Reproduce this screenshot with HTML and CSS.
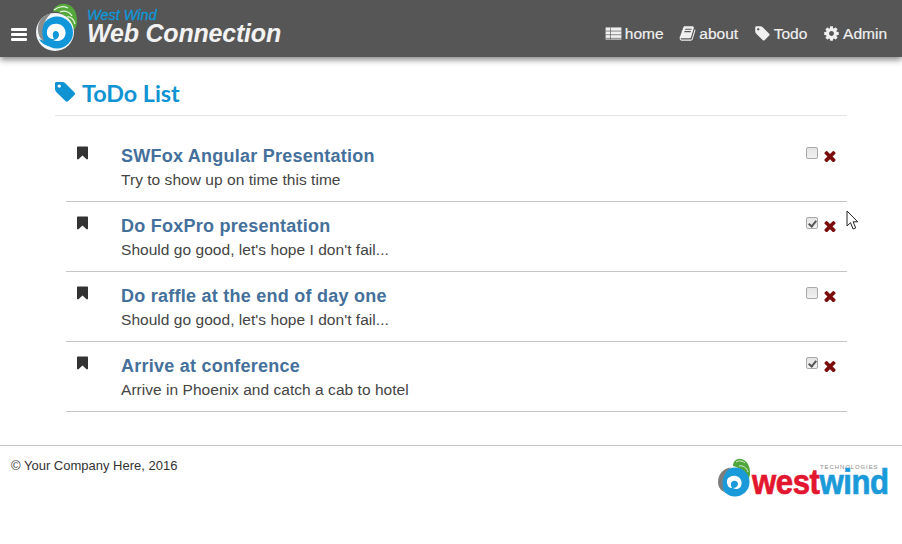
FILE: index.html
```html
<!DOCTYPE html>
<html lang="en">
<head>
<meta charset="utf-8">
<title>ToDo List</title>
<link rel="stylesheet" href="styles.css">
</head>
<body>
<header class="banner">
  <div class="burger"><span></span><span></span><span></span></div>
  <svg class="logo" viewBox="0 0 46 48">
    <path d="M18 9 C19 3 25 0 31 1 C38 2 42 9 42 18 C42 22 41 25 39 27 C37 21 33 15 27 11 C24 9 21 8 18 9Z" fill="#55a83a"/>
    <path d="M19 7 C24 3 29 3 33 5 M25 9 C30 7 35 9 37 13 M32 14 C35 13 39 16 40 21" stroke="#eaf4e2" stroke-width="1.3" fill="none"/>
    <circle cx="20" cy="29" r="19" fill="#f2f6f8"/>
    <circle cx="22" cy="29.5" r="16" fill="#1197d9"/>
    <path d="M16 10.5 C7 12 2 20 3 28 C3.5 33 6 37 10 39 C7 34 6.5 27 9 21 C10.5 17 13 13 16 10.5Z" fill="#8c8c8c"/>
    <path d="M9 38 C13 41 18 43 24 42 C16 45 8 43 4 36Z" fill="#1197d9"/>
    <path d="M12 31 C11 23 18 20 23 21 C29 22 32 28 30 33 C28 38 22 39 18 37 C22 37 24 34 24 31.500 C24 29 22 27.500 20 28 C17.500 29 17 32 19 36 C15 36 12.500 34 12 31Z" fill="#fff"/>
  </svg>
  <div class="brand">
    <div class="brand-small">West Wind</div>
    <div class="brand-big">Web Connection</div>
  </div>
  <nav class="nav">
    <a class="nav-link"><svg class="nav-icon" viewBox="0 0 1792 1792"><path d="M64 256h1664v1280H64z" fill="currentColor"/><path d="M64 640h1664M64 1024h1664M64 1408h1664M576 256v1280" stroke="#565656" stroke-width="70"/></svg>home</a>
    <a class="nav-link"><svg class="nav-icon" viewBox="0 0 1792 1792"><path fill="currentColor" d="M1703 478q40 57 18 129l-275 906q-19 64-76.5 107.5t-122.5 43.5h-923q-77 0-148.5-53.5t-99.5-131.5q-24-67-2-127 0-4 3-27t4-37q1-8-3-21.5t-3-19.5q2-11 8-21t16.5-23.5 16.5-23.5q23-38 45-91.5t30-91.5q3-10 .5-30t-.5-28q3-11 17-28t17-23q21-36 42-92t25-90q1-9-2.5-32t.5-28q4-13 22-30.5t22-22.5q19-26 42.5-84.5t27.5-96.5q1-8-3-25.5t-2-26.5q2-8 9-18t18-23 17-21q8-12 16.5-30.5t15-35 16-36 19.5-32 26.5-23.5 36-11.5 47.5 5.5l-1 3q38-9 51-9h761q74 0 114 56t18 130l-274 906q-36 119-71.5 153.5t-128.5 34.5h-869q-27 0-38 15-11 16-1 43 24 70 144 70h923q29 0 56-15.5t35-41.5l300-987q7-22 5-57 38 15 59 43zm-1064 2q-4 13 2 22.5t20 9.5h608q13 0 25.5-9.5t16.5-22.5l21-64q4-13-2-22.5t-20-9.5h-608q-13 0-25.5 9.5t-16.5 22.5zm-83 256q-4 13 2 22.5t20 9.5h608q13 0 25.5-9.5t16.5-22.5l21-64q4-13-2-22.5t-20-9.5h-608q-13 0-25.5 9.5t-16.5 22.5z"/></svg>about</a>
    <a class="nav-link"><svg class="nav-icon" viewBox="0 0 1792 1792"><path fill="currentColor" d="M576 448q0-53-37.5-90.5t-90.5-37.5-90.5 37.5-37.5 90.5 37.5 90.5 90.5 37.5 90.5-37.5 37.5-90.5zm1067 576q0 53-37 90l-491 492q-39 37-91 37-53 0-90-37l-715-716q-38-37-64.5-101t-26.5-117v-416q0-52 38-90t90-38h416q53 0 117 26.5t102 64.5l715 714q37 39 37 91z"/></svg>Todo</a>
    <a class="nav-link"><svg class="nav-icon" viewBox="0 0 1792 1792"><path fill="currentColor" d="M1152 896q0-106-75-181t-181-75-181 75-75 181 75 181 181 75 181-75 75-181zm512-109v222q0 12-8 23t-20 13l-185 28q-19 54-39 91 35 50 107 138 10 12 10 25t-9 23q-27 37-99 108t-94 71q-12 0-26-9l-138-108q-44 23-91 38-16 136-29 186-7 28-36 28h-222q-14 0-24.5-8.5t-11.5-21.5l-28-184q-49-16-90-37l-141 107q-10 9-25 9-14 0-25-11-126-114-165-168-7-10-7-23 0-12 8-23 15-21 51-66.5t54-70.5q-27-50-41-99l-183-27q-13-2-21-12.5t-8-23.5v-222q0-12 8-23t19-13l186-28q14-46 39-92-40-57-107-138-10-12-10-24 0-10 9-23 26-36 98.5-107.5t94.5-71.5q13 0 26 10l138 107q44-23 91-38 16-136 29-186 7-28 36-28h222q14 0 24.5 8.5t11.5 21.5l28 184q49 16 90 37l142-107q9-9 24-9 13 0 25 10 129 119 165 170 7 8 7 22 0 12-8 23-15 21-51 66.5t-54 70.5q26 50 41 98l183 28q13 2 21 12.5t8 23.5z"/></svg>Admin</a>
  </nav>
</header>

<main class="page">
  <h2 class="page-title"><svg class="title-icon" viewBox="128 192 1515 1408"><path fill="currentColor" d="M576 448q0-53-37.5-90.5t-90.5-37.5-90.5 37.5-37.5 90.5 37.5 90.5 90.5 37.5 90.5-37.5 37.5-90.5zm1067 576q0 53-37 90l-491 492q-39 37-91 37-53 0-90-37l-715-716q-38-37-64.5-101t-26.5-117v-416q0-52 38-90t90-38h416q53 0 117 26.5t102 64.5l715 714q37 39 37 91z"/></svg>ToDo List</h2>

  <ul class="todos">
    <li class="todo">
      <svg class="bookmark" viewBox="256 128 1280 1536"><path fill="currentColor" d="M1420 128q23 0 44 9 33 13 52.5 41t19.5 62v1289q0 34-19.5 62t-52.5 41q-19 8-44 8-48 0-83-32l-441-424-441 424q-36 33-83 33-23 0-44-9-33-13-52.5-41t-19.5-62v-1289q0-34 19.5-62t52.5-41q21-9 44-9h1048z"/></svg>
      <div class="todo-body"><div class="todo-title">SWFox Angular Presentation</div><div class="todo-desc">Try to show up on time this time</div></div>
      <input class="check" type="checkbox">
      <svg class="remove" viewBox="256 256 1280 1280"><path fill="currentColor" d="M1490 1322q0 40-28 68l-136 136q-28 28-68 28t-68-28l-294-294-294 294q-28 28-68 28t-68-28l-136-136q-28-28-28-68t28-68l294-294-294-294q-28-28-28-68t28-68l136-136q28-28 68-28t68 28l294 294 294-294q28-28 68-28t68 28l136 136q28 28 28 68t-28 68l-294 294 294 294q28 28 28 68z"/></svg>
    </li>
    <li class="todo">
      <svg class="bookmark" viewBox="256 128 1280 1536"><path fill="currentColor" d="M1420 128q23 0 44 9 33 13 52.5 41t19.5 62v1289q0 34-19.5 62t-52.5 41q-19 8-44 8-48 0-83-32l-441-424-441 424q-36 33-83 33-23 0-44-9-33-13-52.5-41t-19.5-62v-1289q0-34 19.5-62t52.5-41q21-9 44-9h1048z"/></svg>
      <div class="todo-body"><div class="todo-title">Do FoxPro presentation</div><div class="todo-desc">Should go good, let's hope I don't fail...</div></div>
      <input class="check" type="checkbox" checked>
      <svg class="remove" viewBox="256 256 1280 1280"><path fill="currentColor" d="M1490 1322q0 40-28 68l-136 136q-28 28-68 28t-68-28l-294-294-294 294q-28 28-68 28t-68-28l-136-136q-28-28-28-68t28-68l294-294-294-294q-28-28-28-68t28-68l136-136q28-28 68-28t68 28l294 294 294-294q28-28 68-28t68 28l136 136q28 28 28 68t-28 68l-294 294 294 294q28 28 28 68z"/></svg>
    </li>
    <li class="todo">
      <svg class="bookmark" viewBox="256 128 1280 1536"><path fill="currentColor" d="M1420 128q23 0 44 9 33 13 52.5 41t19.5 62v1289q0 34-19.5 62t-52.5 41q-19 8-44 8-48 0-83-32l-441-424-441 424q-36 33-83 33-23 0-44-9-33-13-52.5-41t-19.5-62v-1289q0-34 19.5-62t52.5-41q21-9 44-9h1048z"/></svg>
      <div class="todo-body"><div class="todo-title">Do raffle at the end of day one</div><div class="todo-desc">Should go good, let's hope I don't fail...</div></div>
      <input class="check" type="checkbox">
      <svg class="remove" viewBox="256 256 1280 1280"><path fill="currentColor" d="M1490 1322q0 40-28 68l-136 136q-28 28-68 28t-68-28l-294-294-294 294q-28 28-68 28t-68-28l-136-136q-28-28-28-68t28-68l294-294-294-294q-28-28-28-68t28-68l136-136q28-28 68-28t68 28l294 294 294-294q28-28 68-28t68 28l136 136q28 28 28 68t-28 68l-294 294 294 294q28 28 28 68z"/></svg>
    </li>
    <li class="todo">
      <svg class="bookmark" viewBox="256 128 1280 1536"><path fill="currentColor" d="M1420 128q23 0 44 9 33 13 52.5 41t19.5 62v1289q0 34-19.5 62t-52.5 41q-19 8-44 8-48 0-83-32l-441-424-441 424q-36 33-83 33-23 0-44-9-33-13-52.5-41t-19.5-62v-1289q0-34 19.5-62t52.5-41q21-9 44-9h1048z"/></svg>
      <div class="todo-body"><div class="todo-title">Arrive at conference</div><div class="todo-desc">Arrive in Phoenix and catch a cab to hotel</div></div>
      <input class="check" type="checkbox" checked>
      <svg class="remove" viewBox="256 256 1280 1280"><path fill="currentColor" d="M1490 1322q0 40-28 68l-136 136q-28 28-68 28t-68-28l-294-294-294 294q-28 28-68 28t-68-28l-136-136q-28-28-28-68t28-68l294-294-294-294q-28-28-28-68t28-68l136-136q28-28 68-28t68 28l294 294 294-294q28-28 68-28t68 28l136 136q28 28 28 68t-28 68l-294 294 294 294q28 28 28 68z"/></svg>
    </li>
  </ul>
</main>

<footer class="footer">
  <div class="copyright">© Your Company Here, 2016</div>
  <div class="footer-logo">
    <svg class="footer-mark" viewBox="0 0 34 39">
      <path d="M15 8 C15 3 19 0 23 1 C29 2 32 8 32 15 C32 18 31 20 30 22 C28 16 22 9 15 8Z" fill="#4fa63a"/>
      <path d="M18 4 C21 2 25 3 27 5 M21 8 C25 7 29 10 30 14" stroke="#dff0d6" stroke-width="1" fill="none"/>
      <circle cx="17" cy="24" r="14.500" fill="#1b9ad9"/>
      <path d="M13 9.500 C5 10 0 17 0 24 C0 28 2 32 6 34 C4 29 4 23 6 18 C8 14 10 11 13 9.500Z" fill="#7d7d7d"/>
      <path d="M9 25 C8 20 13 17 18 18 C22 19 25 23 23 28 C22 31 18 32 15 30 C18 30 20 28 20 26 C20 24 18 22 15 23 C13 24 12 26 14 30 C11 30 9.500 28 9 25Z" fill="#fff"/>
    </svg>
    <div class="wordmark">
      <span class="tech">TECHNOLOGIES</span>
      <div class="wordmark-text"><span class="west">west</span><span class="wind">wind</span></div>
    </div>
  </div>
</footer>

<svg class="cursor" viewBox="0 0 14 21"><path d="M1 1v15l3.500-3.300 2.600 6.300 2.600-1.100-2.600-6.100h4.600z" fill="#fff" stroke="#222" stroke-width="1"/></svg>
</body>
</html>
```

FILE: styles.css
```css
* { box-sizing: border-box; }
html, body { margin: 0; padding: 0; }
body {
  background: #fff;
  color: #444;
  font-family: "Liberation Sans", Arial, sans-serif;
  font-size: 15px;
  overflow: hidden;
  height: 544px;
}
.banner {
  display: flex;
  align-items: center;
  height: 57px;
  padding: 0 15px 0 11px;
  background: #565656;
  box-shadow: 0 3px 6px rgba(0, 0, 0, 0.45);
}
.burger {
  display: flex;
  flex-direction: column;
  gap: 2px;
  width: 16px;
  margin-top: 12px;
}
.burger span { display: block; height: 3px; background: #fff; border-radius: 1px; }
.logo { width: 46px; height: 48px; margin: -3px 0 0 8px; flex: none; }
.brand {
  margin: 0 0 0 6px;
  font-style: italic;
  font-weight: bold;
  padding-bottom: 5px;
}
.brand-small { color: #0e96d8; font-size: 14.5px; height: 14px; line-height: 14px; font-weight: normal; -webkit-text-stroke: 0.3px #0e96d8; }
.brand-big { color: #f2f2f2; font-size: 25px; height: 22px; line-height: 22px; letter-spacing: -0.2px; }
.nav {
  margin-left: auto;
  display: flex;
  gap: 15.7px;
  padding-top: 10px;
}
.nav-link {
  display: flex;
  align-items: center;
  gap: 3px;
  color: #f0f0f0;
  font-size: 15.5px;
  text-decoration: none;
  -webkit-text-stroke: 0.2px #f0f0f0;
}
.nav-icon { width: 17px; height: 17px; flex: none; }
.page { padding: 0 55px; }
.page-title {
  display: flex;
  align-items: center;
  gap: 7px;
  height: 59px;
  margin: 0;
  padding-top: 14px;
  border-bottom: 1px solid #e4e4e4;
  color: #0f93d2;
  font-family: Lato, sans-serif;
  font-size: 23.3px;
  font-weight: 700;
}
.title-icon { width: 20px; height: 20px; flex: none; margin-top: -3px; }
.todos {
  list-style: none;
  margin: 16px 0 0 11px;
  padding: 0;
}
.todo {
  display: flex;
  align-items: flex-start;
  height: 70px;
  padding: 14px 0 0 11px;
  border-bottom: 1px solid #c4c4c4;
}
.bookmark { width: 11px; height: 14px; margin-top: 0; flex: none; color: #333; }
.todo-body { margin-left: 33px; flex: 1; }
.todo-title {
  color: #44709b;
  font-size: 18px;
  font-weight: bold;
  line-height: 20px;
  letter-spacing: 0.25px;
}
.todo-desc {
  margin-top: 4px;
  font-size: 15.5px;
  letter-spacing: 0.04px;
  line-height: 20px;
  color: #444;
}
.check {
  appearance: none;
  width: 12px;
  height: 12px;
  margin: 1px 6px 0 0;
  border: 1px solid #a9a9a9;
  border-radius: 2px;
  background: linear-gradient(#e4e4e4, #f1f1f1);
  flex: none;
  position: relative;
}
.check:checked::after {
  content: "";
  position: absolute;
  left: 2.5px;
  top: 0.5px;
  width: 3px;
  height: 6px;
  border: solid #555;
  border-width: 0 2px 2px 0;
  transform: rotate(40deg);
}
.remove { width: 12px; height: 12px; margin: 4px 11px 0 0; flex: none; color: #7a0c0c; }
.footer {
  display: flex;
  justify-content: space-between;
  margin-top: 33px;
  padding: 12px 14px 0 11px;
  border-top: 1px solid #c4c4c4;
}
.copyright { font-size: 13px; line-height: 16px; color: #333; }
.footer-logo { display: flex; align-items: flex-end; }
.footer-mark { width: 34px; height: 39px; flex: none; }
.wordmark {
  position: relative;
  width: 136px;
  height: 30px;
}
.wordmark-text {
  font-size: 35px;
  font-weight: bold;
  line-height: 30px;
  white-space: nowrap;
  letter-spacing: -0.5px;
  transform: scaleX(0.89);
  transform-origin: left center;
  -webkit-text-stroke: 0.7px;
}
.west { color: #e2162e; }
.wind { color: #1b9ad9; }
.tech {
  position: absolute;
  left: 68px;
  top: -3px;
  color: #8a8a8a;
  font-size: 6px;
  line-height: 6px;
  letter-spacing: 0.9px;
}
.cursor { position: absolute; left: 846px; top: 210px; width: 14px; height: 21px; }
```
